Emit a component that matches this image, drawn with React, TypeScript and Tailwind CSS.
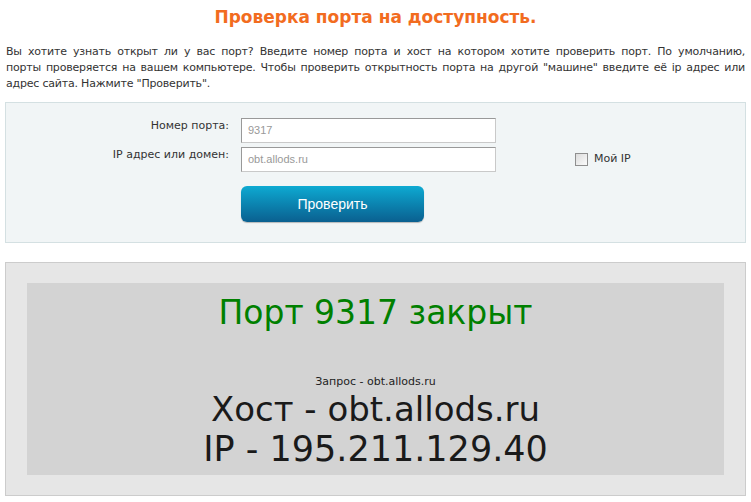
export default function App() {
  const tahoma = { fontFamily: '"DejaVu Sans", Verdana, sans-serif' };
  const arial = { fontFamily: '"Liberation Sans", Arial, sans-serif' };
  return (
    <div className="w-[751px] h-[502px] bg-white overflow-hidden text-[#333]" style={tahoma}>
      <h1 className="text-center text-[#f26c1f] font-bold text-[17px] leading-[20px] pt-[7px]">
        Проверка порта на доступность.
      </h1>

      <div className="mt-[17px] px-[6px] text-[11px] leading-[16px] text-[#333] tracking-[-0.2px]">
        <div className="text-justify [text-align-last:justify]">
          Вы хотите узнать открыт ли у вас порт? Введите номер порта и хост на котором хотите проверить порт. По умолчанию,
        </div>
        <div className="text-justify [text-align-last:justify]">
          порты проверяется на вашем компьютере. Чтобы проверить открытность порта на другой "машине" введите её ip адрес или
        </div>
        <div>адрес сайта. Нажмите "Проверить".</div>
      </div>

      <div className="mx-[5px] mt-[10px] h-[141px] border border-[#d4e0e2] bg-[#f1f5f6] pt-[15px]">
        <div className="flex items-center h-[25px]">
          <div className="w-[225px] text-right text-[11px] pr-[2px] -mt-[8px]">Номер порта:</div>
          <div className="ml-[10px] w-[255px] h-[25px] border border-[#c9c9c9] border-t-[#999] border-l-[#999] bg-white text-[11px] text-[#999] pl-[6px] flex items-center" style={arial}>
            9317
          </div>
        </div>
        <div className="flex items-center h-[25px] mt-[4px]">
          <div className="w-[225px] text-right text-[11px] pr-[2px] -mt-[8px]">IP адрес или домен:</div>
          <div className="ml-[10px] w-[255px] h-[25px] border border-[#c9c9c9] border-t-[#999] border-l-[#999] bg-white text-[11px] text-[#999] pl-[6px] flex items-center" style={arial}>
            obt.allods.ru
          </div>
          <div className="ml-[79px] flex items-center gap-[6px]">
            <span className="w-[13px] h-[13px] border border-[#8f8f8f] bg-gradient-to-br from-[#dcdcdc] to-[#fbfbfb]" />
            <span className="text-[11px]">Мой IP</span>
          </div>
        </div>
        <div className="ml-[235px] mt-[14px] w-[183px] h-[36px] rounded-[6px] bg-gradient-to-b from-[#0eaad2] to-[#0a6090] text-white text-[14px] flex items-center justify-center shadow-[0_1px_1px_rgba(0,0,0,0.25)]" style={arial}>
          Проверить
        </div>
      </div>

      <div className="mx-[5px] mt-[19px] h-[234px] border border-[#cccccc] bg-[#e6e6e6] px-[21px] pt-[20px]">
        <div className="h-[192px] bg-[#d3d3d3] flex flex-col items-center">
          <div className="text-[#008000] text-[33px] leading-[40px] mt-[10px]">Порт 9317 закрыт</div>
          <div className="text-[11px] leading-[14px] text-[#222] mt-[42px]">Запрос - obt.allods.ru</div>
          <div className="text-[34px] leading-[40px] text-[#1a1a1a]">Хост - obt.allods.ru</div>
          <div className="text-[35px] leading-[40px] text-[#1a1a1a]">IP - 195.211.129.40</div>
        </div>
      </div>
    </div>
  );
}
